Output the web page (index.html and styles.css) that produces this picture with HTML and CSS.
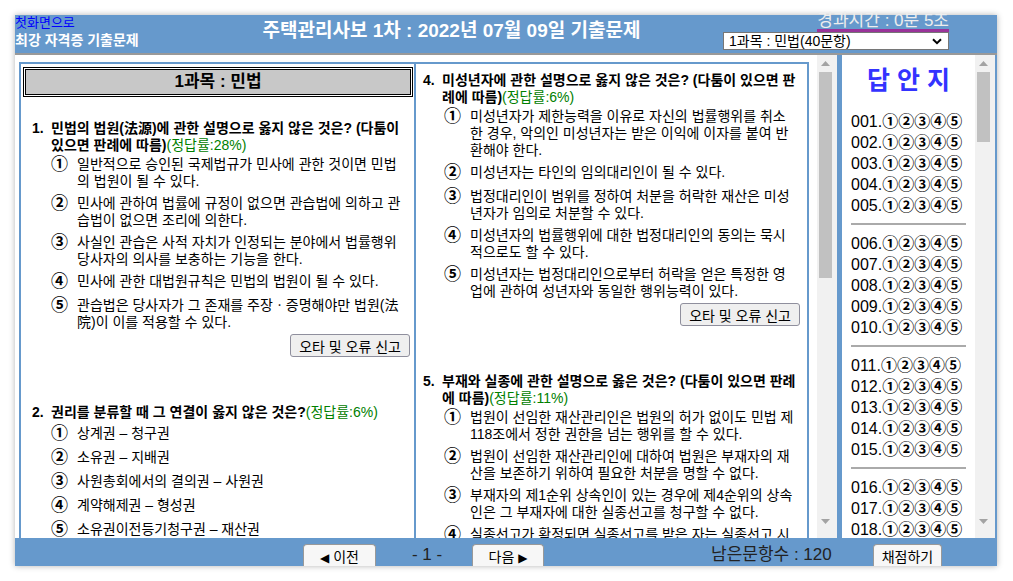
FILE: index.html
```html
<!DOCTYPE html>
<html lang="ko">
<head>
  <meta charset="UTF-8">
  <title>주택관리사보 1차 기출문제</title>
  <link rel="stylesheet" href="styles.css">
</head>
<body>
  <div class="page">
    <header class="top">
      <div class="brand">
        <a class="home" href="#">첫화면으로</a>
        <div class="slogan">최강 자격증 기출문제</div>
      </div>
      <h1 class="title">주택관리사보 1차 : 2022년 07월 09일 기출문제</h1>
      <div class="tools">
        <span class="timer">경과시간 : 0분 5초</span>
        <div class="subject-select">
          <select>
            <option>1과목 : 민법(40문항)</option>
            <option>2과목 : 회계원리(40문항)</option>
            <option>3과목 : 공동주택 시설개론(40문항)</option>
          </select>
          <svg class="chevron" width="10" height="7" viewBox="0 0 10 7"><path d="M1 1.2l4 4 4-4" fill="none" stroke="#000" stroke-width="2"/></svg>
        </div>
      </div>
    </header>

    <div class="main">
      <div class="paper">
        <div class="paper-body">
          <div class="exam">
            <!-- 왼쪽 단 -->
            <div class="col col-left">
              <div class="subject">1과목 : 민법</div>

              <div class="q">
                <p class="q-title"><span class="q-no">1.</span><span>민법의 법원(法源)에 관한 설명으로 옳지 않은 것은? (다툼이 있으면 판례에 따름)<span class="rate">(정답률:28%)</span></span></p>
                <ol class="choices">
                  <li><span class="mark">①</span><span class="choice-text">일반적으로 승인된 국제법규가 민사에 관한 것이면 민법의 법원이 될 수 있다.</span></li>
                  <li><span class="mark">②</span><span class="choice-text">민사에 관하여 법률에 규정이 없으면 관습법에 의하고 관습법이 없으면 조리에 의한다.</span></li>
                  <li><span class="mark">③</span><span class="choice-text">사실인 관습은 사적 자치가 인정되는 분야에서 법률행위 당사자의 의사를 보충하는 기능을 한다.</span></li>
                  <li><span class="mark">④</span><span class="choice-text">민사에 관한 대법원규칙은 민법의 법원이 될 수 있다.</span></li>
                  <li><span class="mark">⑤</span><span class="choice-text">관습법은 당사자가 그 존재를 주장ㆍ증명해야만 법원(法院)이 이를 적용할 수 있다.</span></li>
                </ol>
                <div class="q-foot"><button class="report">오타 및 오류 신고</button></div>
              </div>

              <div class="q">
                <p class="q-title q-gap"><span class="q-no">2.</span><span>권리를 분류할 때 그 연결이 옳지 않은 것은?<span class="rate">(정답률:6%)</span></span></p>
                <ol class="choices">
                  <li><span class="mark">①</span><span class="choice-text">상계권 – 청구권</span></li>
                  <li><span class="mark">②</span><span class="choice-text">소유권 – 지배권</span></li>
                  <li><span class="mark">③</span><span class="choice-text">사원총회에서의 결의권 – 사원권</span></li>
                  <li><span class="mark">④</span><span class="choice-text">계약해제권 – 형성권</span></li>
                  <li><span class="mark">⑤</span><span class="choice-text">소유권이전등기청구권 – 재산권</span></li>
                </ol>
                <div class="q-foot"><button class="report">오타 및 오류 신고</button></div>
              </div>

              <div class="q">
                <p class="q-title"><span class="q-no">3.</span><span>의사표시에 관한 설명으로 옳은 것은? (다툼이 있으면 판례에 따름)<span class="rate">(정답률:37%)</span></span></p>
                <ol class="choices">
                  <li><span class="mark">①</span><span class="choice-text">상대방 있는 의사표시는 상대방에게 도달한 때부터 그 효력이 생긴다.</span></li>
                  <li><span class="mark">②</span><span class="choice-text">비진의 의사표시는 상대방이 표의자의 진의 아님을 알았더라도 유효하다.</span></li>
                  <li><span class="mark">③</span><span class="choice-text">통정허위표시의 무효는 선의의 제3자에게 대항할 수 있다.</span></li>
                  <li><span class="mark">④</span><span class="choice-text">착오가 표의자의 중대한 과실로 인한 때에도 의사표시를 취소할 수 있다.</span></li>
                  <li><span class="mark">⑤</span><span class="choice-text">사기에 의한 의사표시의 취소는 선의의 제3자에게 대항할 수 있다.</span></li>
                </ol>
                <div class="q-foot"><button class="report">오타 및 오류 신고</button></div>
              </div>
            </div>

            <!-- 오른쪽 단 -->
            <div class="col col-right">
              <div class="q">
                <p class="q-title"><span class="q-no">4.</span><span>미성년자에 관한 설명으로 옳지 않은 것은? (다툼이 있으면 판례에 따름)<span class="rate">(정답률:6%)</span></span></p>
                <ol class="choices">
                  <li><span class="mark">①</span><span class="choice-text">미성년자가 제한능력을 이유로 자신의 법률행위를 취소한 경우, 악의인 미성년자는 받은 이익에 이자를 붙여 반환해야 한다.</span></li>
                  <li><span class="mark">②</span><span class="choice-text">미성년자는 타인의 임의대리인이 될 수 있다.</span></li>
                  <li><span class="mark">③</span><span class="choice-text">법정대리인이 범위를 정하여 처분을 허락한 재산은 미성년자가 임의로 처분할 수 있다.</span></li>
                  <li><span class="mark">④</span><span class="choice-text">미성년자의 법률행위에 대한 법정대리인의 동의는 묵시적으로도 할 수 있다.</span></li>
                  <li><span class="mark">⑤</span><span class="choice-text">미성년자는 법정대리인으로부터 허락을 얻은 특정한 영업에 관하여 성년자와 동일한 행위능력이 있다.</span></li>
                </ol>
                <div class="q-foot"><button class="report">오타 및 오류 신고</button></div>
              </div>

              <div class="q">
                <p class="q-title"><span class="q-no">5.</span><span>부재와 실종에 관한 설명으로 옳은 것은? (다툼이 있으면 판례에 따름)<span class="rate">(정답률:11%)</span></span></p>
                <ol class="choices">
                  <li><span class="mark">①</span><span class="choice-text">법원이 선임한 재산관리인은 법원의 허가 없이도 민법 제118조에서 정한 권한을 넘는 행위를 할 수 있다.</span></li>
                  <li><span class="mark">②</span><span class="choice-text">법원이 선임한 재산관리인에 대하여 법원은 부재자의 재산을 보존하기 위하여 필요한 처분을 명할 수 없다.</span></li>
                  <li><span class="mark">③</span><span class="choice-text">부재자의 제1순위 상속인이 있는 경우에 제4순위의 상속인은 그 부재자에 대한 실종선고를 청구할 수 없다.</span></li>
                  <li><span class="mark">④</span><span class="choice-text">실종선고가 확정되면 실종선고를 받은 자는 실종선고 시에 사망한 것으로 본다.</span></li>
                  <li><span class="mark">⑤</span><span class="choice-text">실종선고가 취소되면 실종선고를 직접원인으로 하여 재산을 취득한 자는 받은 이익을 반환할 의무가 있다.</span></li>
                </ol>
                <div class="q-foot"><button class="report">오타 및 오류 신고</button></div>
              </div>

              <div class="q">
                <p class="q-title"><span class="q-no">6.</span><span>법인에 관한 설명으로 옳지 않은 것은? (다툼이 있으면 판례에 따름)<span class="rate">(정답률:41%)</span></span></p>
                <ol class="choices">
                  <li><span class="mark">①</span><span class="choice-text">법인은 법률의 규정에 좇아 정관으로 정한 목적의 범위 내에서 권리와 의무의 주체가 된다.</span></li>
                  <li><span class="mark">②</span><span class="choice-text">사단법인의 정관은 특별한 규정이 없으면 총사원 3분의 2 이상의 동의가 있는 때에 한하여 이를 변경할 수 있다.</span></li>
                  <li><span class="mark">③</span><span class="choice-text">이사가 수인인 경우에는 정관에 다른 규정이 없으면 법인의 사무집행은 이사의 과반수로써 결정한다.</span></li>
                  <li><span class="mark">④</span><span class="choice-text">재단법인의 기본재산은 정관의 기재사항이 아니다.</span></li>
                  <li><span class="mark">⑤</span><span class="choice-text">법인의 대표자가 직무에 관하여 타인에게 손해를 가한 경우 법인은 손해배상책임이 있다.</span></li>
                </ol>
                <div class="q-foot"><button class="report">오타 및 오류 신고</button></div>
              </div>
            </div>
          </div>
        </div>

        <div class="vscroll">
          <div class="vs-btn"><svg width="9" height="5" viewBox="0 0 9 5"><path d="M0 5L4.5 0 9 5z" fill="#a3a3a3"/></svg></div>
          <div class="vs-track"><div class="vs-thumb thumb-paper"></div></div>
          <div class="vs-btn"><svg width="9" height="5" viewBox="0 0 9 5"><path d="M0 0L4.5 5 9 0z" fill="#a3a3a3"/></svg></div>
        </div>
      </div>

      <div class="side">
        <div class="side-body">
          <div class="side-title">답 안 지</div>
          <div class="answer-list"></div>
        </div>

        <div class="vscroll">
          <div class="vs-btn"><svg width="9" height="5" viewBox="0 0 9 5"><path d="M0 5L4.5 0 9 5z" fill="#a3a3a3"/></svg></div>
          <div class="vs-track"><div class="vs-thumb thumb-side"></div></div>
          <div class="vs-btn"><svg width="9" height="5" viewBox="0 0 9 5"><path d="M0 0L4.5 5 9 0z" fill="#a3a3a3"/></svg></div>
        </div>
      </div>
    </div>

    <footer class="bottom">
      <button class="tab prev"><span class="arrow">◀</span> 이전</button>
      <span class="page-no">- 1 -</span>
      <button class="tab next">다음 <span class="arrow">▶</span></button>
      <span class="remain">남은문항수 : 120</span>
      <button class="tab grade">채점하기</button>
    </footer>
  </div>

  <script src="script.js"></script>
</body>
</html>
```

FILE: styles.css
```css
:root {
  --frame: #6699cc;
}

body {
  margin: 0;
  padding: 15px;
  font-family: "Liberation Sans", "Noto Sans CJK KR", sans-serif;
  background: #fff;
  color: #000;
}

.page {
  width: 982px;
  background: #fff;
  box-shadow: 0 0 6px rgba(0, 0, 0, 0.3);
}

/* 상단 */
.top {
  display: flex;
  height: 38px;
  background: var(--frame);
  border-bottom: 2px solid #999;
}

.brand {
  width: 165px;
  flex: none;
}

.home {
  display: block;
  padding-top: 1px;
  font-size: 13px;
  line-height: 14px;
  color: #00f;
  text-decoration: none;
  white-space: nowrap;
}

.slogan {
  font-size: 14px;
  font-weight: bold;
  line-height: 20px;
  color: #fff;
  white-space: nowrap;
}

.title {
  flex: 1;
  margin: 0;
  font-size: 19px;
  line-height: 31px;
  text-align: center;
  color: #fff;
  white-space: nowrap;
}

.tools {
  flex: none;
  display: flex;
  flex-direction: column;
  align-items: flex-end;
  width: 226px;
  padding-right: 48px;
  margin-top: -3px;
}

.timer {
  font-size: 17px;
  line-height: 17px;
  color: #eee;
  border-bottom: 3px solid #993399;
  white-space: nowrap;
}

.subject-select {
  position: relative;
  width: 226px;
  height: 18px;
}

.subject-select select {
  appearance: none;
  -webkit-appearance: none;
  width: 100%;
  height: 18px;
  padding: 0 0 0 5px;
  border: 1px solid #767676;
  border-radius: 0;
  background: #fff;
  font-family: inherit;
  font-size: 14px;
  line-height: 16px;
  color: #000;
}

.chevron {
  position: absolute;
  right: 7px;
  top: 6px;
  pointer-events: none;
}

/* 본문 */
.main {
  display: flex;
  height: 483px;
}

.paper {
  display: flex;
  width: 822px;
  flex: none;
}

.paper-body {
  flex: 1;
  overflow: hidden;
  padding: 7px 0 0 4px;
}

.exam {
  display: grid;
  grid-template-columns: 393px 391px;
  gap: 2px;
  width: 790px;
  box-sizing: border-box;
  border: 2px solid var(--frame);
  background: var(--frame);
}

.col {
  background: #fff;
}

.col-left {
  padding: 0 4px 0 11px;
}

.col-left .choices {
  margin-right: 5px;
}

.col-right {
  padding: 8px 7px 0 7px;
}

.col-right .choices {
  padding-left: 21px;
  margin-right: 6px;
}

.subject {
  margin: 5px -1px 25px -7px;
  border: 1px solid #000;
  outline: 1px solid #000;
  outline-offset: 1px;
  background: #c8c8c8;
  font-size: 17px;
  font-weight: bold;
  line-height: 24px;
  text-align: center;
}

.q {
  margin-bottom: 47px;
}

.q-title {
  display: flex;
  margin: 0;
  font-size: 14px;
  font-weight: bold;
  line-height: 17px;
}

.q-gap {
  margin-top: 2px;
  margin-bottom: 2px;
}

.q-no {
  flex: none;
  width: 19px;
}

.rate {
  color: #008000;
  font-weight: normal;
}

.choices {
  list-style: none;
  margin: 0;
  padding: 0 0 0 19px;
  font-size: 14px;
}

.choices li {
  display: flex;
  margin-bottom: 3px;
}

.mark {
  flex: none;
  width: 26px;
  font-size: 17px;
  font-weight: bold;
  line-height: 21px;
}

.choice-text {
  padding-top: 2px;
  line-height: 17px;
}

.q-foot {
  text-align: right;
}

.report {
  height: 23px;
  padding: 0 8px;
  border: 1px solid #8f8f9d;
  border-radius: 3px;
  background: #efefef;
  font-family: inherit;
  font-size: 14px;
  color: #000;
}

/* 스크롤바 모양 */
.vscroll {
  flex: none;
  display: flex;
  flex-direction: column;
  width: 20px;
  padding-bottom: 8px;
  background: #f1f1f1;
}

.vs-btn {
  display: flex;
  align-items: center;
  justify-content: center;
  width: 17px;
  height: 17px;
}

.vs-track {
  flex: 1;
}

.vs-thumb {
  width: 13px;
  margin-left: 2px;
  background: #c1c1c1;
}

.thumb-paper {
  height: 206px;
}

.thumb-side {
  height: 70px;
}

/* 답안지 */
.side {
  display: flex;
  width: 160px;
  flex: none;
  box-sizing: border-box;
  border-left: 5px solid var(--frame);
  border-right: 2px solid var(--frame);
}

.side-body {
  flex: 1;
  overflow: hidden;
}

.side-title {
  margin: 11px 0 17px;
  font-size: 25px;
  font-weight: bold;
  line-height: 28px;
  text-align: center;
  color: #3333ff;
  white-space: nowrap;
}

.ans-row {
  padding-left: 9px;
  font-size: 16px;
  line-height: 21px;
  white-space: nowrap;
}

.ans-mark {
  font-weight: bold;
}

.ans-sep {
  width: 115px;
  height: 0;
  margin: 7px 0 8px 9px;
  border: 0;
  border-top: 2px solid #aaa;
}

/* 하단 */
.bottom {
  display: flex;
  align-items: flex-end;
  height: 28px;
  padding-left: 288px;
  background: var(--frame);
}

.tab {
  box-sizing: border-box;
  height: 22px;
  padding: 0;
  border: 1px solid #999;
  border-bottom: 0;
  border-radius: 4px 4px 0 0;
  background: #f7f7f7;
  font-family: inherit;
  font-size: 14px;
  color: #000;
  white-space: nowrap;
}

.arrow {
  font-family: "DejaVu Sans", sans-serif;
  font-size: 12px;
}

.prev {
  width: 73px;
}

.page-no {
  width: 32px;
  margin-left: 35px;
  font-size: 17px;
  line-height: 22px;
  text-align: center;
  color: #222;
  white-space: nowrap;
}

.next {
  width: 72px;
  margin-left: 29px;
}

.remain {
  width: 121px;
  margin-left: 167px;
  font-size: 17px;
  line-height: 22px;
  color: #222;
  white-space: nowrap;
}

.grade {
  width: 69px;
  margin-left: 41px;
}
```

FILE: script.js
```js
// 답안지 120문항 (5문항마다 구분선)
const list = document.querySelector('.answer-list');
const marks = ['①', '②', '③', '④', '⑤'];
let rows = '';

for (let i = 1; i <= 120; i++) {
  const no = String(i).padStart(3, '0');
  rows += '<div class="ans-row">' + no + '.';
  marks.forEach(function (m) {
    rows += '<span class="ans-mark">' + m + '</span>';
  });
  rows += '</div>';
  if (i % 5 === 0 && i < 120) {
    rows += '<hr class="ans-sep">';
  }
}

list.innerHTML = rows;
```
